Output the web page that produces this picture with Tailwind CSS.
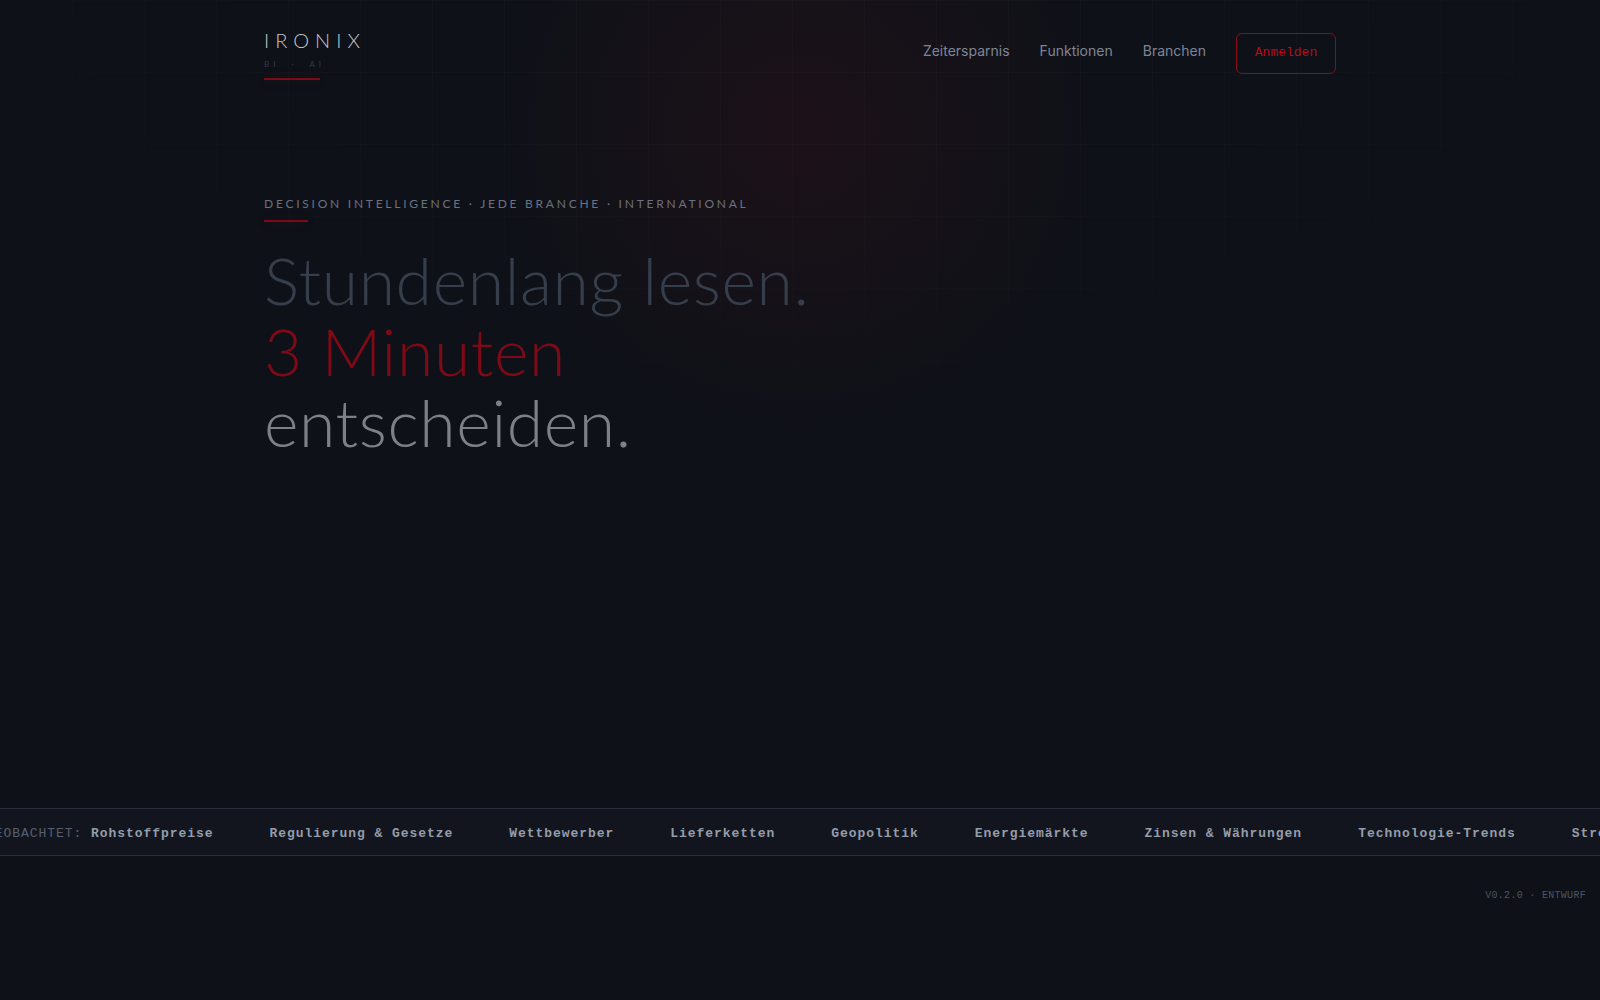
<!DOCTYPE html>
<html lang="de">
<head>
<meta charset="utf-8">
<meta name="viewport" content="width=device-width, initial-scale=1">
<title>IRONIX</title>
<script src="https://cdn.jsdelivr.net/npm/@tailwindcss/browser@4"></script>
</head>
<body class="relative min-h-screen overflow-x-hidden bg-[#0e1118] font-['Inter',sans-serif] text-[#7d8595]">
<!-- background: fading grid and red glow -->
<div class="pointer-events-none absolute inset-x-0 top-0 h-[808px] bg-[linear-gradient(to_right,rgba(255,255,255,0.02)_1px,transparent_1px),linear-gradient(to_bottom,rgba(255,255,255,0.02)_1px,transparent_1px)] bg-[size:72px_72px] [mask-image:radial-gradient(ellipse_70%_60%_at_50%_0%,black_30%,transparent_100%)]"></div>
<div class="pointer-events-none absolute inset-x-0 top-0 h-[808px] bg-[radial-gradient(circle_at_50%_130px,rgba(200,16,30,0.08),transparent_330px)]"></div>

<div class="relative flex min-h-[808px] flex-col">
  <header class="mx-auto flex w-full max-w-[1120px] items-start justify-between px-6 pt-8">
    <a href="#" class="flex flex-col font-['Lato',sans-serif]">
      <span class="text-xl leading-4 font-light tracking-[0.3em] text-[#c4c6ca]">IRONIX</span>
      <span class="mt-3 text-[8px] leading-2 tracking-[0.5em] whitespace-pre text-[#343a46]">BI  ·  AI</span>
      <span class="mt-2.5 h-0.5 w-14 bg-[#7d0a16] shadow-[0_0_12px_rgba(200,16,30,0.2)]"></span>
    </a>
    <nav class="flex items-baseline gap-[30px] pt-px text-sm">
      <a href="#zeit">Zeitersparnis</a>
      <a href="#funktionen">Funktionen</a>
      <a href="#branchen">Branchen</a>
      <button type="button" class="h-[41px] w-[100px] rounded-md border border-[#8d0a18] font-['Liberation_Mono',monospace] text-[13px] text-[#b80a1a]">Anmelden</button>
    </nav>
  </header>

  <main class="mx-auto w-full max-w-[1120px] px-6 pt-[116px]">
    <p class="font-['Lato',sans-serif] text-xs leading-4 tracking-[0.23em] text-[#6b7280]">DECISION INTELLIGENCE · JEDE BRANCHE · INTERNATIONAL</p>
    <div class="mt-2 h-0.5 w-11 bg-[#7d0a16] shadow-[0_0_12px_rgba(200,16,30,0.2)]"></div>
    <h1 class="mt-[22px] font-['Lato',sans-serif] text-[66px] leading-[71px] font-light tracking-[0.01em]">
      <span class="block text-[#373e4b]">Stundenlang lesen.</span>
      <span class="block text-[#7d0a16]">3 Minuten</span>
      <span class="block text-[#7d8086]">entscheiden.</span>
    </h1>
  </main>
</div>

<section aria-label="Beobachtete Themen" class="relative overflow-hidden border-y border-[#28303d] bg-[#12151d]">
  <div class="-ml-3.5 flex w-max gap-14 pt-4 pb-3 font-['Liberation_Mono',monospace] text-[13px] leading-[18px] font-bold tracking-[0.073em] text-[#949dab]">
    <span><span class="font-normal text-[#566070]">BEOBACHTET:</span> Rohstoffpreise</span>
    <span>Regulierung &amp; Gesetze</span>
    <span>Wettbewerber</span>
    <span>Lieferketten</span>
    <span>Geopolitik</span>
    <span>Energiemärkte</span>
    <span>Zinsen &amp; Währungen</span>
    <span>Technologie-Trends</span>
    <span>Strompreise</span>
  </div>
</section>

<footer class="relative flex justify-end px-3.5 pt-8 font-['Liberation_Mono',monospace] text-[10px] leading-4 tracking-[0.03em] text-[#4b5563]">V0.2.0 · ENTWURF</footer>
</body>
</html>
